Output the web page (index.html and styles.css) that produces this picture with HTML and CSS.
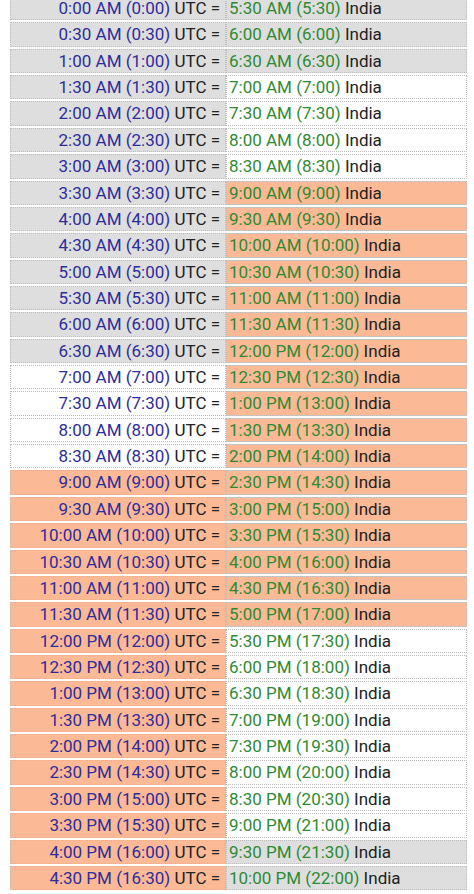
FILE: index.html
```html
<!DOCTYPE html>
<html>
<head>
<meta charset="utf-8">
<link rel="stylesheet" href="styles.css">
</head>
<body>
<table class="conv">
<tbody>
<tr><td class="utc night"><span class="t">0:00 AM (0:00)</span> UTC =</td><td class="loc night"><span class="g">5:30 AM (5:30)</span> India</td></tr>
<tr><td class="utc night"><span class="t">0:30 AM (0:30)</span> UTC =</td><td class="loc night"><span class="g">6:00 AM (6:00)</span> India</td></tr>
<tr><td class="utc night"><span class="t">1:00 AM (1:00)</span> UTC =</td><td class="loc night"><span class="g">6:30 AM (6:30)</span> India</td></tr>
<tr><td class="utc night"><span class="t">1:30 AM (1:30)</span> UTC =</td><td class="loc day"><span class="g">7:00 AM (7:00)</span> India</td></tr>
<tr><td class="utc night"><span class="t">2:00 AM (2:00)</span> UTC =</td><td class="loc day"><span class="g">7:30 AM (7:30)</span> India</td></tr>
<tr><td class="utc night"><span class="t">2:30 AM (2:30)</span> UTC =</td><td class="loc day"><span class="g">8:00 AM (8:00)</span> India</td></tr>
<tr><td class="utc night"><span class="t">3:00 AM (3:00)</span> UTC =</td><td class="loc day"><span class="g">8:30 AM (8:30)</span> India</td></tr>
<tr><td class="utc night"><span class="t">3:30 AM (3:30)</span> UTC =</td><td class="loc work"><span class="g">9:00 AM (9:00)</span> India</td></tr>
<tr><td class="utc night"><span class="t">4:00 AM (4:00)</span> UTC =</td><td class="loc work"><span class="g">9:30 AM (9:30)</span> India</td></tr>
<tr><td class="utc night"><span class="t">4:30 AM (4:30)</span> UTC =</td><td class="loc work"><span class="g">10:00 AM (10:00)</span> India</td></tr>
<tr><td class="utc night"><span class="t">5:00 AM (5:00)</span> UTC =</td><td class="loc work"><span class="g">10:30 AM (10:30)</span> India</td></tr>
<tr><td class="utc night"><span class="t">5:30 AM (5:30)</span> UTC =</td><td class="loc work"><span class="g">11:00 AM (11:00)</span> India</td></tr>
<tr><td class="utc night"><span class="t">6:00 AM (6:00)</span> UTC =</td><td class="loc work"><span class="g">11:30 AM (11:30)</span> India</td></tr>
<tr><td class="utc night"><span class="t">6:30 AM (6:30)</span> UTC =</td><td class="loc work"><span class="g">12:00 PM (12:00)</span> India</td></tr>
<tr><td class="utc day"><span class="t">7:00 AM (7:00)</span> UTC =</td><td class="loc work"><span class="g">12:30 PM (12:30)</span> India</td></tr>
<tr><td class="utc day"><span class="t">7:30 AM (7:30)</span> UTC =</td><td class="loc work"><span class="g">1:00 PM (13:00)</span> India</td></tr>
<tr><td class="utc day"><span class="t">8:00 AM (8:00)</span> UTC =</td><td class="loc work"><span class="g">1:30 PM (13:30)</span> India</td></tr>
<tr><td class="utc day"><span class="t">8:30 AM (8:30)</span> UTC =</td><td class="loc work"><span class="g">2:00 PM (14:00)</span> India</td></tr>
<tr><td class="utc work"><span class="t">9:00 AM (9:00)</span> UTC =</td><td class="loc work"><span class="g">2:30 PM (14:30)</span> India</td></tr>
<tr><td class="utc work"><span class="t">9:30 AM (9:30)</span> UTC =</td><td class="loc work"><span class="g">3:00 PM (15:00)</span> India</td></tr>
<tr><td class="utc work"><span class="t">10:00 AM (10:00)</span> UTC =</td><td class="loc work"><span class="g">3:30 PM (15:30)</span> India</td></tr>
<tr><td class="utc work"><span class="t">10:30 AM (10:30)</span> UTC =</td><td class="loc work"><span class="g">4:00 PM (16:00)</span> India</td></tr>
<tr><td class="utc work"><span class="t">11:00 AM (11:00)</span> UTC =</td><td class="loc work"><span class="g">4:30 PM (16:30)</span> India</td></tr>
<tr><td class="utc work"><span class="t">11:30 AM (11:30)</span> UTC =</td><td class="loc work"><span class="g">5:00 PM (17:00)</span> India</td></tr>
<tr><td class="utc work"><span class="t">12:00 PM (12:00)</span> UTC =</td><td class="loc day"><span class="g">5:30 PM (17:30)</span> India</td></tr>
<tr><td class="utc work"><span class="t">12:30 PM (12:30)</span> UTC =</td><td class="loc day"><span class="g">6:00 PM (18:00)</span> India</td></tr>
<tr><td class="utc work"><span class="t">1:00 PM (13:00)</span> UTC =</td><td class="loc day"><span class="g">6:30 PM (18:30)</span> India</td></tr>
<tr><td class="utc work"><span class="t">1:30 PM (13:30)</span> UTC =</td><td class="loc day"><span class="g">7:00 PM (19:00)</span> India</td></tr>
<tr><td class="utc work"><span class="t">2:00 PM (14:00)</span> UTC =</td><td class="loc day"><span class="g">7:30 PM (19:30)</span> India</td></tr>
<tr><td class="utc work"><span class="t">2:30 PM (14:30)</span> UTC =</td><td class="loc day"><span class="g">8:00 PM (20:00)</span> India</td></tr>
<tr><td class="utc work"><span class="t">3:00 PM (15:00)</span> UTC =</td><td class="loc day"><span class="g">8:30 PM (20:30)</span> India</td></tr>
<tr><td class="utc work"><span class="t">3:30 PM (15:30)</span> UTC =</td><td class="loc day"><span class="g">9:00 PM (21:00)</span> India</td></tr>
<tr><td class="utc work"><span class="t">4:00 PM (16:00)</span> UTC =</td><td class="loc night"><span class="g">9:30 PM (21:30)</span> India</td></tr>
<tr><td class="utc work"><span class="t">4:30 PM (16:30)</span> UTC =</td><td class="loc night"><span class="g">10:00 PM (22:00)</span> India</td></tr>
</tbody>
</table>
</body>
</html>
```

FILE: styles.css
```css
html, body {
  margin: 0;
  padding: 0;
  background: #ffffff;
}
body {
  font-family: Roboto, "Liberation Sans", Arial, sans-serif;
  font-size: 17px;
  color: #222222;
}
.conv {
  border-collapse: separate;
  border-spacing: 0 2px;
  margin: -6px 0 0 10px;
  width: 457px;
  table-layout: fixed;
}
.conv td {
  border: 1px dotted #bdbdbd;
  line-height: 22.36px;
  padding: 0;
  white-space: nowrap;
  overflow: hidden;
}
.utc {
  width: 209px;
  text-align: right;
  padding-right: 5px !important;
}
.loc {
  text-align: left;
  padding-left: 2px !important;
}
.t {
  color: #2d2d9c;
}
.g {
  color: #2f8a33;
}
.night {
  background: #dedede;
}
.day {
  background: #ffffff;
}
.work {
  background: #fbb995;
}
```
